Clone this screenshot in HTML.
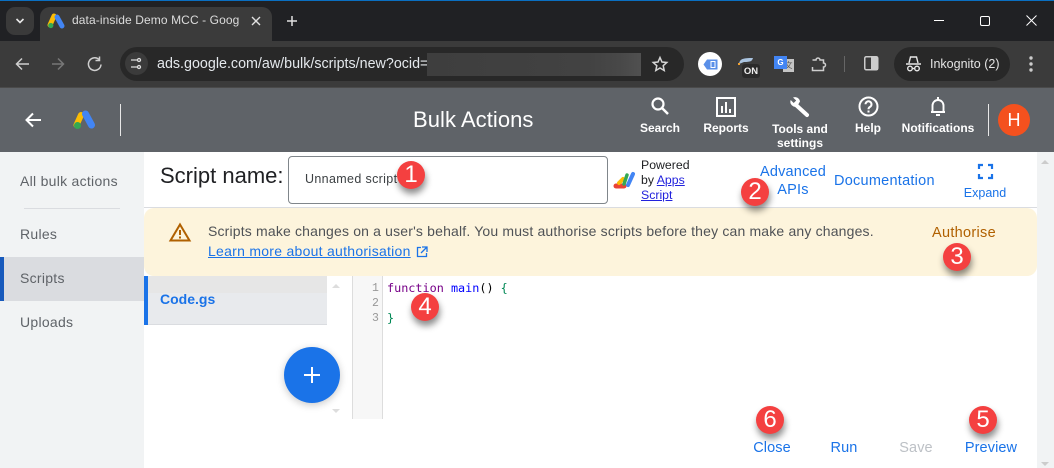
<!DOCTYPE html>
<html><head><meta charset="utf-8"><style>
*{box-sizing:border-box}
html,body{margin:0;padding:0}
body{width:1054px;height:468px;overflow:hidden;position:relative;background:#fff;font-family:"Liberation Sans",sans-serif}
.a{position:absolute}
.t{position:absolute;white-space:nowrap;line-height:1.15}
.c{transform:translateX(-50%);text-align:center}
.h{color:#fff;font-weight:bold;font-size:12px}
.b{color:#1a73e8}
.l{font-size:14px;letter-spacing:.28px}
.n{position:absolute;width:28px;height:28px;border-radius:50%;background:#f44040;color:#fff;font-size:24px;line-height:28px;text-align:center;box-shadow:1px 5px 7px rgba(0,0,0,.45)}
svg{position:absolute;overflow:visible}
</style></head><body>
<!-- tab strip -->
<div class="a" style="left:0;top:0;width:1054px;height:41px;background:#202124"></div>
<div class="a" style="left:0;top:0;width:1054px;height:1px;background:#0a6fc2"></div>
<div class="a" style="left:6px;top:7px;width:28px;height:28px;border-radius:9px;background:#3a3a3a"></div>
<svg style="left:0;top:0" width="60" height="41"><path d="M16.500 19l3.500 3.500 3.500-3.500" fill="none" stroke="#e8e8e8" stroke-width="1.600"/></svg>
<div class="a" style="left:40px;top:7px;width:232px;height:36px;border-radius:10px 10px 0 0;background:#3b3b3b"></div>
<svg style="left:48px;top:14px" width="17" height="15"><path d="M6 2L2 11" stroke="#fbbc04" stroke-width="5" stroke-linecap="round"/><path d="M9 3l5 9" stroke="#4285f4" stroke-width="5" stroke-linecap="round"/><circle cx="2.800" cy="11.500" r="2.600" fill="#34a853"/></svg>
<div class="t" style="left:72px;top:14px;font-size:12px;letter-spacing:.1px;color:#dcdcdc;width:167px;overflow:hidden">data-inside Demo MCC - Googl</div>
<svg style="left:250px;top:15px" width="12" height="12"><path d="M2 2l8 8M10 2l-8 8" stroke="#e0e0e0" stroke-width="1.400"/></svg>
<svg style="left:285px;top:14px" width="14" height="14"><path d="M7 2v10M2 7h10" stroke="#e0e0e0" stroke-width="1.500"/></svg>
<svg style="left:0;top:0" width="1054" height="41"><path d="M934 20.500h10" stroke="#fff"/><rect x="980.500" y="16.500" width="9" height="9" rx="1.500" fill="none" stroke="#fff"/><path d="M1026.500 15.500l10 10M1036.500 15.500l-10 10" stroke="#fff" stroke-width="1"/></svg>
<!-- toolbar -->
<div class="a" style="left:0;top:41px;width:1054px;height:47px;background:#3b3b3b"></div>
<div class="a" style="left:0;top:87px;width:1054px;height:1px;background:#4a4a4a"></div>
<svg style="left:14px;top:54px" width="100" height="22" fill="none" stroke-width="1.500"><path d="M15 10H3M8 4.500L2.500 10 8 15.500" stroke="#cfcfcf"/><path d="M38 10h11M44 4.500l5.500 5.500-5.500 5.500" stroke="#777"/><path d="M85 5.500a6.300 6.300 0 1 0 2 5" stroke="#cfcfcf"/><path d="M85.500 2.500v4h-4" stroke="#cfcfcf"/></svg>
<div class="a" style="left:120px;top:47px;width:564px;height:34px;border-radius:17px;background:#282828"></div>
<div class="a" style="left:125px;top:52px;width:23px;height:23px;border-radius:50%;background:#3b3b3b"></div>
<svg style="left:130px;top:57px" width="14" height="13" fill="none" stroke="#ddd" stroke-width="1.300"><path d="M1 3h6M1 10h6M10 10h1"/><circle cx="9" cy="3" r="1.500"/><circle cx="9" cy="10" r="1.500"/></svg>
<div class="t" style="left:157px;top:56px;font-size:14.300px;color:#e4e8ec">ads.google.com/aw/bulk/scripts/new?ocid=</div>
<div class="a" style="left:427px;top:53px;width:214px;height:23px;background:linear-gradient(90deg,#3e3e3e,#424242 75%,#484848 90%,#505050)"></div>
<svg style="left:651px;top:55px" width="18" height="18"><path d="M9 2.500l2 4.500 4.800.5-3.600 3.200 1 4.800L9 13l-4.200 2.500 1-4.800L2.200 7.500 7 7z" fill="none" stroke="#d5d5d5" stroke-width="1.500"/></svg>
<div class="a" style="left:698px;top:52px;width:24px;height:24px;border-radius:50%;background:#fff"></div>
<svg style="left:703px;top:59px" width="15" height="11"><path d="M4 .5h10.500v10H4L.5 5.500z" fill="#5a8fe8"/><rect x="8" y="2.500" width="4" height="6" fill="none" stroke="#fff"/></svg>
<svg style="left:738px;top:56px" width="16" height="10"><path d="M1 8c1-5 3-6 14-6-1 3-2 4-9 4z" fill="#aac4e0"/><path d="M1 9v-2" stroke="#f0a030" stroke-width="2"/></svg>
<div class="a" style="left:742px;top:64px;width:18px;height:14px;border-radius:3px;background:#2a2a2a;color:#eee;font-size:9.500px;font-weight:bold;text-align:center;line-height:15px">ON</div>
<div class="a" style="left:774px;top:56px;width:13px;height:13px;background:#4285f4;color:#fff;font-size:8px;font-weight:bold;text-align:center;line-height:13px;z-index:2">G</div>
<div class="a" style="left:783px;top:59px;width:11px;height:13px;background:#c5c5c5;color:#555;font-size:8px;text-align:center;line-height:13px;font-family:'Liberation Sans','Noto Sans CJK SC',sans-serif">文</div>
<svg style="left:810px;top:55px" width="18" height="18"><path d="M2.500 5h3.500a2 2 0 0 1 4 0h3.500v3a2 2 0 0 1 0 4v3.500H2.500V12" fill="none" stroke="#cfcfcf" stroke-width="1.500"/></svg>
<div class="a" style="left:844px;top:56px;width:1px;height:16px;background:#666"></div>
<svg style="left:864px;top:56px" width="15" height="15"><rect x=".75" y=".75" width="13" height="13" rx="1.500" fill="none" stroke="#ccc" stroke-width="1.500"/><rect x="7" y="1" width="7" height="13" fill="#ccc"/></svg>
<div class="a" style="left:894px;top:47px;width:116px;height:34px;border-radius:17px;background:#282828"></div>
<svg style="left:905px;top:55px" width="18" height="18" fill="none" stroke="#e8e8e8" stroke-width="1.400"><path d="M1 9h15M4 8l1.500-6h6L13 8"/><circle cx="5" cy="13.500" r="2.300"/><circle cx="12" cy="13.500" r="2.300"/><path d="M7.300 13.500h2.400"/></svg>
<div class="t" style="left:930px;top:57px;font-size:12.500px;color:#e4e4e4">Inkognito (2)</div>
<svg style="left:1028px;top:56px" width="6" height="16" fill="#ccc"><circle cx="3" cy="2" r="1.700"/><circle cx="3" cy="8" r="1.700"/><circle cx="3" cy="14" r="1.700"/></svg>
<!-- app header -->
<div class="a" style="left:0;top:88px;width:1054px;height:64px;background:#5f6368"></div>
<svg style="left:23px;top:110px" width="20" height="20"><path d="M18 10H3M10 3.500L3.500 10l6.500 6.500" fill="none" stroke="#fff" stroke-width="2"/></svg>
<svg style="left:73px;top:109px" width="24" height="22"><path d="M8 6L3.500 16" stroke="#fbbc04" stroke-width="6" stroke-linecap="round"/><path d="M12.500 5l6 11" stroke="#4285f4" stroke-width="7" stroke-linecap="round"/><circle cx="4.500" cy="16.500" r="3.500" fill="#34a853"/></svg>
<div class="a" style="left:120px;top:104px;width:1px;height:32px;background:#e8e8e8"></div>
<div class="t" style="left:413px;top:107px;font-size:22px;color:#fff;letter-spacing:.05px">Bulk Actions</div>
<svg style="left:650px;top:96px" width="20" height="20"><circle cx="8" cy="8" r="5.500" fill="none" stroke="#fff" stroke-width="2.200"/><path d="M12 12l6 6" stroke="#fff" stroke-width="2.500"/></svg>
<div class="t h c" style="left:660px;top:122px">Search</div>
<svg style="left:716px;top:97px" width="20" height="20"><rect x="1" y="1" width="18" height="18" fill="none" stroke="#fff" stroke-width="2"/><path d="M6 16V9M10 16V5M14 16v-4" stroke="#fff" stroke-width="2"/></svg>
<div class="t h c" style="left:726px;top:122px">Reports</div>
<svg style="left:789px;top:96px" width="22" height="22"><path d="M7 9L18 19" stroke="#fff" stroke-width="4" stroke-linecap="round"/><path d="M11 5.500A5 5 0 0 0 4 1.500l3.200 3-2.500 2.500-3-3A5 5 0 0 0 8 10.500z" fill="#fff"/></svg>
<div class="t h c" style="left:800px;top:122px;line-height:14px">Tools and<br>settings</div>
<svg style="left:858px;top:96px" width="21" height="21"><circle cx="10.500" cy="10.500" r="9" fill="none" stroke="#fff" stroke-width="2"/><path d="M7.500 8.300a3 3 0 1 1 4.500 2.600c-1 .6-1.500 1.200-1.500 2.400" fill="none" stroke="#fff" stroke-width="2"/><rect x="9.500" y="14.500" width="2" height="2" fill="#fff"/></svg>
<div class="t h c" style="left:868px;top:122px">Help</div>
<svg style="left:929px;top:96px" width="18" height="21"><path d="M2 16h14M3.500 16V9.500a5.500 5.500 0 0 1 11 0V16" fill="none" stroke="#fff" stroke-width="1.900"/><rect x="8" y="1" width="2" height="3" fill="#fff"/><rect x="7" y="18" width="4" height="2" fill="#fff"/></svg>
<div class="t h c" style="left:938px;top:122px">Notifications</div>
<div class="a" style="left:988px;top:104px;width:1px;height:32px;background:#e8e8e8"></div>
<div class="a" style="left:998px;top:104px;width:32px;height:32px;border-radius:50%;background:#f4511e;color:#fff;font-size:18px;text-align:center;line-height:32px">H</div>
<!-- sidebar -->
<div class="a" style="left:0;top:152px;width:144px;height:316px;background:#f1f3f4"></div>
<div class="t l" style="left:20px;top:173px;color:#5f6368">All bulk actions</div>
<div class="a" style="left:24px;top:208px;width:96px;height:1px;background:#dadce0"></div>
<div class="t l" style="left:20px;top:226px;color:#5f6368">Rules</div>
<div class="a" style="left:0;top:257px;width:144px;height:44px;background:#dadce0"></div>
<div class="a" style="left:0;top:257px;width:4px;height:44px;background:#185abc"></div>
<div class="t l" style="left:20px;top:270px;color:#5f6368">Scripts</div>
<div class="t l" style="left:20px;top:314px;color:#5f6368">Uploads</div>
<!-- right scrollbar -->
<div class="a" style="left:1037px;top:152px;width:17px;height:316px;background:#f1f3f4"></div>
<svg style="left:1040px;top:158px" width="10" height="8"><path d="M1 6l4-4 4 4z" fill="#ccc"/></svg>
<svg style="left:1040px;top:460px" width="10" height="8"><path d="M1 2l4 4 4-4z" fill="#ccc"/></svg>
<!-- title row -->
<div class="t" style="left:160px;top:163px;font-size:22px;color:#202124">Script name:</div>
<div class="a" style="left:288px;top:156px;width:320px;height:48px;border:1px solid #80868b;border-radius:4px;background:#fff"></div>
<div class="t" style="left:305px;top:172px;font-size:12.500px;letter-spacing:.35px;color:#3c4043">Unnamed script</div>
<svg style="left:613px;top:170px" width="23" height="20" fill="none" stroke-linecap="round"><path d="M3 16h8" stroke="#ea4335" stroke-width="5"/><path d="M6 13l4-4" stroke="#fbbc04" stroke-width="4"/><path d="M11 14l3-9" stroke="#34a853" stroke-width="3.500"/><path d="M15 15l5-11" stroke="#4285f4" stroke-width="4"/></svg>
<div class="t" style="left:641px;top:158px;font-size:12.300px;line-height:15px;color:#202124">Powered<br>by <span style="text-decoration:underline;color:#2222dd">Apps</span><br><span style="text-decoration:underline;color:#2222dd">Script</span></div>
<div class="t b c" style="left:793px;top:163px;font-size:14.500px;letter-spacing:.2px;line-height:18px">Advanced<br>APIs</div>
<div class="t b" style="left:834px;top:173px;font-size:14.500px;letter-spacing:.25px">Documentation</div>
<svg style="left:978px;top:164px" width="15" height="15" fill="none" stroke="#1a73e8" stroke-width="2.200"><path d="M1 5V1h4M10 1h4v4M14 10v4h-4M5 14H1v-4"/></svg>
<div class="t b c" style="left:985px;top:186px;font-size:12.500px">Expand</div>
<div class="a" style="left:144px;top:207px;width:893px;height:1px;background:#dadce0"></div>
<!-- banner -->
<div class="a" style="left:144px;top:208px;width:893px;height:68px;background:#fdf4dc;border-radius:10px"></div>
<svg style="left:169px;top:222px" width="22" height="20"><path d="M11 2.500L20.500 18.500h-19z" fill="none" stroke="#b06000" stroke-width="2"/><path d="M11 8v5M11 14.500v2" stroke="#b06000" stroke-width="2"/></svg>
<div class="t" style="left:208px;top:223px;font-size:14px;color:#4f5256;letter-spacing:.17px">Scripts make changes on a user's behalf. You must authorise scripts before they can make any changes.</div>
<div class="t" style="left:208px;top:243px;font-size:14px;letter-spacing:.27px;color:#1a73e8;text-decoration:underline">Learn more about authorisation</div>
<svg style="left:416px;top:246px" width="12" height="12" fill="none" stroke="#1a73e8" stroke-width="1.300"><path d="M5 1.500H1.500v9h9V7M6 1h5v5M11 1L5 7"/></svg>
<div class="t c" style="left:964px;top:225px;font-size:14.500px;letter-spacing:.3px;color:#b06000">Authorise</div>
<!-- file list -->
<div class="a" style="left:144px;top:276px;width:183px;height:49px;background:#e8eaed;border-bottom:1px solid #dadce0"></div>
<div class="a" style="left:144px;top:276px;width:183px;height:17px;background:#e6e6e6"></div>
<div class="a" style="left:144px;top:276px;width:4px;height:49px;background:#1a73e8"></div>
<div class="t" style="left:160px;top:291px;font-size:14px;font-weight:bold;color:#1a73e8">Code.gs</div>
<svg style="left:331px;top:282px" width="10" height="8"><path d="M1 6l4-4 4 4z" fill="#ddd"/></svg>
<svg style="left:331px;top:407px" width="10" height="8"><path d="M1 2l4 4 4-4z" fill="#ddd"/></svg>
<div class="a" style="left:284px;top:347px;width:56px;height:56px;border-radius:50%;background:#1a73e8;box-shadow:0 2px 8px rgba(0,0,0,.22)"></div>
<svg style="left:303px;top:366px" width="18" height="18"><path d="M9 1v16M1 9h16" stroke="#fff" stroke-width="2"/></svg>
<!-- editor -->
<div class="a" style="left:352px;top:276px;width:31px;height:143px;background:#f7f7f7;border-left:1px solid #ddd;border-right:1px solid #ddd"></div>
<div class="t" style="left:372px;top:281px;font:11.500px/15px 'Liberation Mono',monospace;color:#999">1<br>2<br>3</div>
<div class="t" style="left:387px;top:281px;font:11.800px/15px 'DejaVu Sans Mono','Liberation Mono',monospace;color:#000"><span style="color:#708">function</span> <span style="color:#00f">main</span>() <span style="color:#085">{</span><br><br><span style="color:#085">}</span></div>
<!-- footer -->
<div class="t b c" style="left:772px;top:440px;font-size:14.500px;letter-spacing:.1px">Close</div>
<div class="t b c" style="left:844px;top:440px;font-size:14.500px;letter-spacing:.1px">Run</div>
<div class="t c" style="left:916px;top:440px;font-size:14.500px;letter-spacing:.1px;color:#bdc1c6">Save</div>
<div class="t b c" style="left:991px;top:440px;font-size:14.500px;letter-spacing:.1px">Preview</div>
<!-- callouts -->
<div class="n" style="left:397px;top:161px">1</div>
<div class="n" style="left:741px;top:178px">2</div>
<div class="n" style="left:943px;top:243px">3</div>
<div class="n" style="left:411px;top:293px">4</div>
<div class="n" style="left:969px;top:406px">5</div>
<div class="n" style="left:756px;top:406px">6</div>
</body></html>
